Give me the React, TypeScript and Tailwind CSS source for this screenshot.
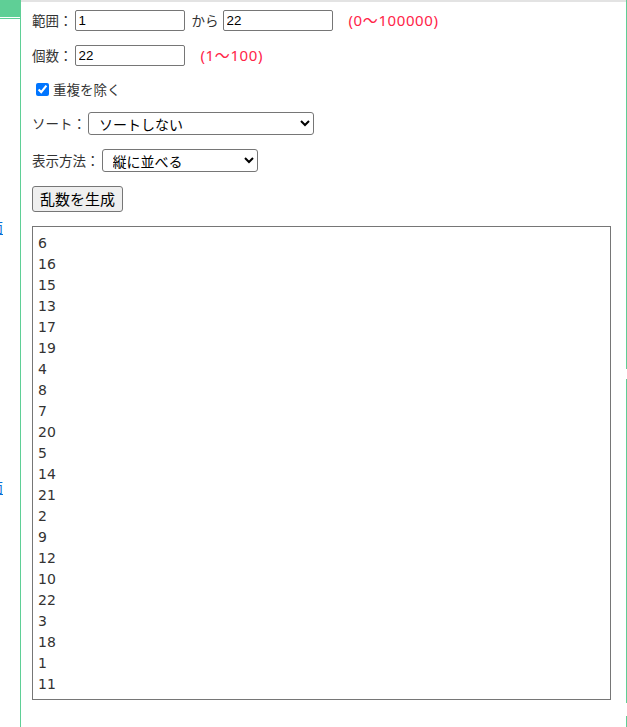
import { useState } from 'react'

const jp = "font-['Noto_Sans_CJK_JP','Noto_Sans',sans-serif]"
const note = "text-[#ff2448] text-[15px] tracking-[0.6px] font-['Noto_Sans','Noto_Sans_CJK_JP',sans-serif]"

const result = [6, 16, 15, 13, 17, 19, 4, 8, 7, 20, 5, 14, 21, 2, 9, 12, 10, 22, 3, 18, 1, 11]

const App = () => {
    const [min, setMin] = useState('1')
    const [max, setMax] = useState('22')
    const [count, setCount] = useState('22')
    const [unique, setUnique] = useState(true)

    const inputCls = "w-[110px] h-[21px] border border-[#767676] rounded-[2px] px-[3px] text-[13.33px] text-black font-['Liberation_Sans',Arial,sans-serif] bg-white outline-none"
    const selectCls = "h-[23px] border border-[#767676] rounded-[3px] pl-[6px] text-[14px] text-black bg-white outline-none " + jp

    return (
        <div className="flex w-[627px] h-[727px] bg-white overflow-hidden">
            {/* left side nav, mostly scrolled out of view */}
            <div className="w-[21px] shrink-0 flex flex-col border-r border-[#5fcf96] overflow-hidden">
                <div className="h-[17px] w-[20px] bg-[#5fcf96]"></div>
                <div className="h-[1px] w-[20px] bg-white"></div>
                <div className="h-[1px] w-[20px] bg-[#5fcf96]"></div>
                <a className={"mt-[200px] -ml-[11px] text-[14px] leading-[16px] text-[#0a6fd6] underline " + jp}>面</a>
                <a className={"mt-[244px] -ml-[11px] text-[14px] leading-[16px] text-[#0a6fd6] underline " + jp}>面</a>
            </div>

            <div className="w-[605px] shrink-0 border-t-2 border-[#e3e3e3] pl-[11px] pt-[8px] flex flex-col">
                <div className={"flex items-center h-[21px] text-[13.5px] text-[#333] " + jp}>
                    <span className="mr-[2px]">範囲：</span>
                    <input className={inputCls} value={min} onChange={(e) => setMin(e.target.value)} />
                    <span className="ml-[7px] mr-[4px]">から</span>
                    <input className={inputCls} value={max} onChange={(e) => setMax(e.target.value)} />
                    <span className={"ml-[16px] " + note}>(0〜100000)</span>
                </div>

                <div className={"flex items-center h-[21px] mt-[14px] text-[13.5px] text-[#333] " + jp}>
                    <span className="mr-[2px]">個数：</span>
                    <input className={inputCls} value={count} onChange={(e) => setCount(e.target.value)} />
                    <span className={"ml-[16px] " + note}>(1〜100)</span>
                </div>

                <label className={"flex items-center h-[21px] mt-[13px] text-[13.5px] text-[#333] " + jp}>
                    <input type="checkbox" checked={unique} onChange={(e) => setUnique(e.target.checked)} className="ml-[4px] mr-[4px] w-[13px] h-[13px]" />
                    重複を除く
                </label>

                <div className={"flex items-center h-[23px] mt-[12px] text-[13.5px] text-[#333] " + jp}>
                    <span className="mr-[2px]">ソート：</span>
                    <select className={selectCls + " w-[226px]"} defaultValue="none">
                        <option value="none">ソートしない</option>
                        <option value="asc">昇順</option>
                        <option value="desc">降順</option>
                    </select>
                </div>

                <div className={"flex items-center h-[23px] mt-[14px] text-[13.5px] text-[#333] " + jp}>
                    <span className="mr-[2px]">表示方法：</span>
                    <select className={selectCls + " w-[156px]"} defaultValue="col">
                        <option value="col">縦に並べる</option>
                        <option value="row">横に並べる</option>
                    </select>
                </div>

                <div className="mt-[14px]">
                    <button className={"w-[91px] h-[26px] border border-[#767676] rounded-[3px] bg-[#efefef] text-[15px] text-black " + jp}>乱数を生成</button>
                </div>

                <textarea
                    readOnly
                    value={result.join('\n')}
                    className="mt-[14px] w-[579px] h-[474px] border border-[#767676] px-[5px] pt-[6px] text-[14px] leading-[21px] text-[#333] font-['DejaVu_Sans',Verdana,sans-serif] resize-none outline-none overflow-hidden"
                />
            </div>

            {/* right edge of the next panel */}
            <div className="w-[1px] shrink-0 flex flex-col">
                <div className="h-[369px] bg-[#5fcf96]"></div>
                <div className="h-[10px]"></div>
                <div className="h-[324px] bg-[#5fcf96]"></div>
                <div className="h-[13px]"></div>
                <div className="flex-1 bg-[#5fcf96]"></div>
            </div>
        </div>
    )
}

export default App
